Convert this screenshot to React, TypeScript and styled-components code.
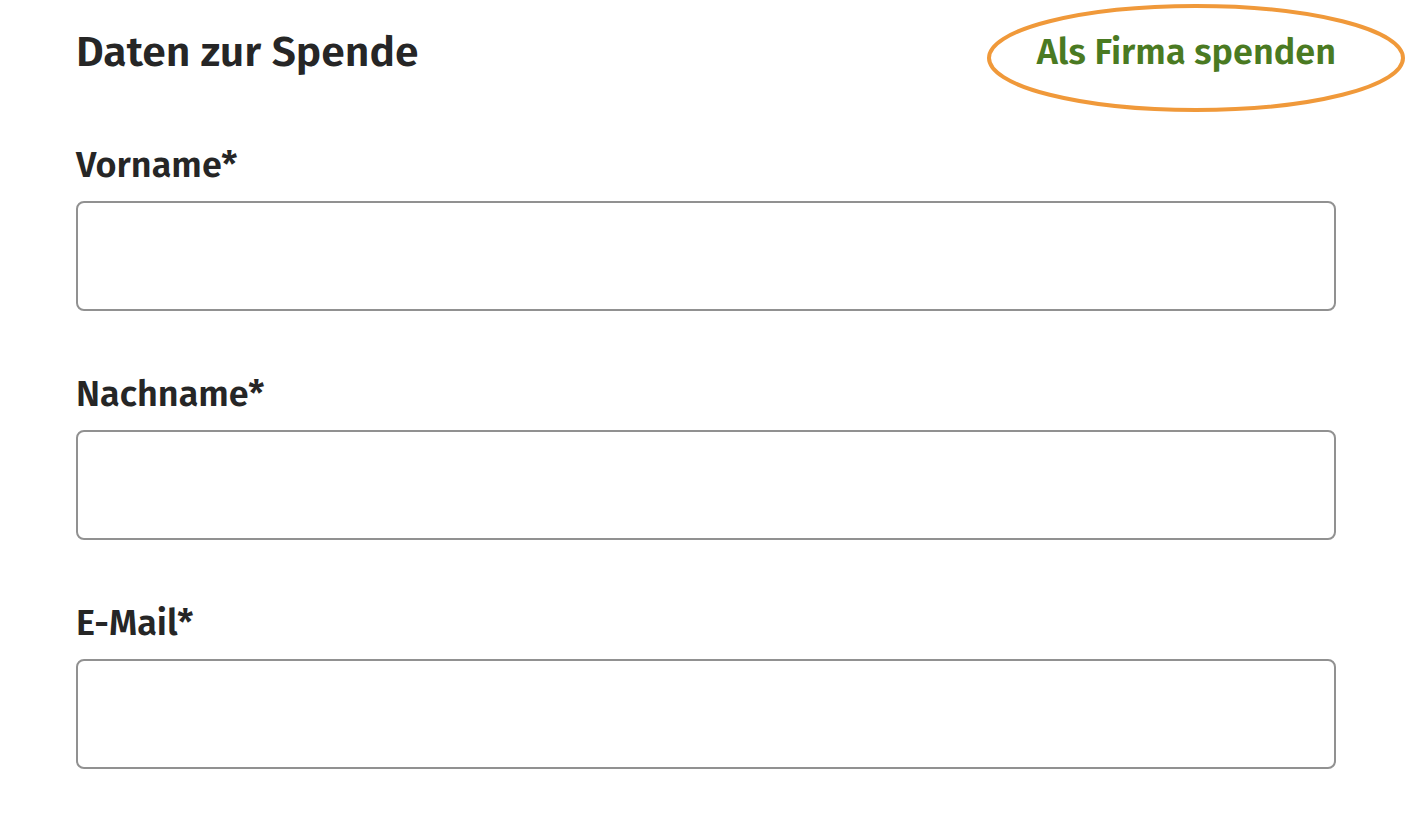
import React from "react";
import styled, { createGlobalStyle } from "styled-components";

const GlobalStyle = createGlobalStyle`
  html, body {
    margin: 0;
    padding: 0;
    background: #ffffff;
  }
  body {
    font-family: "Fira Sans", "Open Sans", "Noto Sans", sans-serif;
    color: #262626;
  }
`;

const Page = styled.div`
  width: 1412px;
  height: 816px;
  box-sizing: border-box;
  padding: 24px 76px 0 76px;
  overflow: hidden;
`;

const Form = styled.form`
  width: 1260px;
  display: flex;
  flex-direction: column;
`;

const Header = styled.div`
  display: flex;
  align-items: center;
  justify-content: space-between;
  height: 56px;
  margin-bottom: 65px;
`;

const Title = styled.h2`
  margin: 0;
  font-size: 42.7px;
  font-weight: 600;
  line-height: 56px;
`;

const LinkWrap = styled.div`
  position: relative;
`;

const CompanyLink = styled.a`
  font-size: 36px;
  font-weight: 600;
  color: #4a7a22;
  text-decoration: none;
  line-height: 56px;
  cursor: pointer;
`;

const Circle = styled.svg`
  position: absolute;
  left: -51px;
  top: -22px;
  width: 420px;
  height: 112px;
  pointer-events: none;
  overflow: visible;
`;

const Field = styled.div`
  display: flex;
  flex-direction: column;
  margin-bottom: 63px;
`;

const Label = styled.label`
  font-size: 36px;
  font-weight: 600;
  line-height: 40px;
  margin-bottom: 16px;
`;

const Input = styled.input`
  box-sizing: border-box;
  width: 100%;
  height: 110px;
  border: 2px solid #919191;
  border-radius: 8px;
  background: #fff;
  font: inherit;
  font-size: 30px;
  padding: 0 20px;
  outline: none;
`;

const fields = ["Vorname*", "Nachname*", "E-Mail*"];

export default function App() {
  return (
    <>
      <GlobalStyle />
      <Page>
        <Form>
          <Header>
            <Title>Daten zur Spende</Title>
            <LinkWrap>
              <CompanyLink>Als Firma spenden</CompanyLink>
              <Circle viewBox="0 0 420 112">
                <ellipse
                  cx="210"
                  cy="56"
                  rx="207"
                  ry="52"
                  fill="none"
                  stroke="#f0993a"
                  strokeWidth="4"
                />
              </Circle>
            </LinkWrap>
          </Header>
          {fields.map((f) => (
            <Field key={f}>
              <Label>{f}</Label>
              <Input type="text" />
            </Field>
          ))}
        </Form>
      </Page>
    </>
  );
}
